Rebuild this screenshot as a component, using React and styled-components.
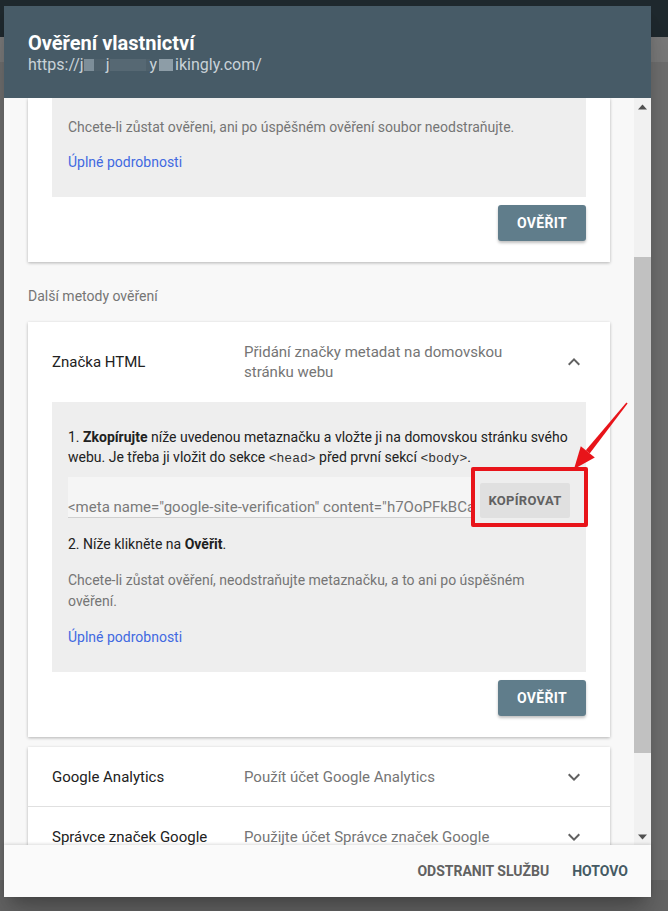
import React from "react";
import styled, { createGlobalStyle } from "styled-components";

const Global = createGlobalStyle`
  html, body {
    margin: 0;
    padding: 0;
  }
  body {
    font-family: Roboto, "Liberation Sans", Arial, sans-serif;
    background: #707070;
  }
  * {
    box-sizing: border-box;
  }
`;

const Backdrop = styled.div`
  position: relative;
  width: 668px;
  height: 911px;
  overflow: hidden;
  padding: 6px 17px 14px 4px;
  background: linear-gradient(
    #1f292e 0 37px,
    #7b7b7b 37px 62px,
    #707070 62px 880px,
    #666 880px
  );
`;

const Dialog = styled.div`
  position: relative;
  width: 647px;
  height: 891px;
  display: flex;
  flex-direction: column;
  background: #f8f8f8;
  box-shadow: 0 11px 15px -7px rgba(0, 0, 0, 0.25),
    0 24px 38px 3px rgba(0, 0, 0, 0.16);
`;

const Header = styled.header`
  height: 92px;
  flex-shrink: 0;
  background: #475b67;
  padding: 25px 24px 0;
  color: #fff;
`;

const Title = styled.h1`
  margin: 0;
  font-size: 20px;
  line-height: 24px;
  font-weight: 700;
`;

const Url = styled.div`
  display: flex;
  align-items: center;
  font-size: 16px;
  line-height: 20px;
  color: #c9d2d8;
`;

const Blur = styled.span`
  display: inline-block;
  width: ${(p) => p.$w}px;
  height: 12px;
  margin: 0 ${(p) => p.$m || 0}px;
  background: ${(p) => p.$c || "#8797a1"};
`;

const Body = styled.div`
  flex: 1;
  display: flex;
  min-height: 0;
`;

const Content = styled.div`
  flex: 1;
  padding: 0 24px;
  overflow: hidden;
  display: flex;
  flex-direction: column;
`;

const Card = styled.section`
  flex-shrink: 0;
  background: #fff;
  box-shadow: 0 1px 3px rgba(0, 0, 0, 0.28);
  padding: ${(p) => (p.$flush ? "0" : "0 24px 21px")};
  margin-top: ${(p) => p.$top || 0}px;
`;

const Panel = styled.div`
  background: #eeeeee;
  padding: ${(p) => (p.$clipped ? "19px" : "25px")} 16px 25px;
  font-size: 14px;
  line-height: 20px;
  color: #212121;
`;

const Step = styled.p`
  margin: ${(p) => p.$top || 0}px 0 0;
  b {
    font-weight: 700;
  }
`;

const Code = styled.code`
  font-family: "Liberation Mono", "DejaVu Sans Mono", monospace;
  font-size: 13px;
  color: #333;
`;

const Note = styled.p`
  margin: ${(p) => p.$top || 0}px 0 0;
  line-height: 21px;
  color: #757575;
`;

const Link = styled.a`
  display: block;
  margin-top: ${(p) => p.$top || 14}px;
  color: #4169e1;
  text-decoration: none;
`;

const Actions = styled.div`
  display: flex;
  justify-content: flex-end;
  margin-top: 8px;
`;

const PrimaryButton = styled.button`
  min-width: 88px;
  height: 36px;
  border: 0;
  border-radius: 3px;
  background: #607d8b;
  color: #fff;
  font-family: inherit;
  font-size: 14px;
  font-weight: 700;
  letter-spacing: 0.3px;
  box-shadow: 0 2px 3px rgba(0, 0, 0, 0.25);
`;

const SectionLabel = styled.div`
  margin: 24px 0 16px;
  font-size: 14px;
  line-height: 20px;
  color: #757575;
`;

const MethodHead = styled.div`
  display: grid;
  grid-template-columns: 192px 1fr 24px;
  align-items: center;
  padding: 20px 0;
`;

const MethodRow = styled.div`
  display: grid;
  grid-template-columns: 192px 1fr 24px;
  align-items: center;
  height: 60px;
  padding: 0 24px;
  border-bottom: 1px solid #e0e0e0;
`;

const MethodName = styled.div`
  font-size: 15px;
  line-height: 20px;
  color: #212121;
`;

const MethodDesc = styled.div`
  max-width: ${(p) => (p.$wrap ? "280px" : "none")};
  font-size: 15px;
  line-height: 20px;
  color: #757575;
`;

const CopyRow = styled.div`
  display: flex;
  align-items: flex-end;
  margin-top: 8px;
`;

const Field = styled.div`
  flex: 1;
  min-width: 0;
  height: 41px;
  padding-top: 20px;
  margin-right: 6px;
  background: #f5f5f5;
  border-bottom: 1px solid #cfcfcf;
  white-space: nowrap;
  overflow: hidden;
  font-size: 15px;
  line-height: 20px;
  color: #7a7a7a;
`;

const CopyButton = styled.button`
  width: 90px;
  height: 35px;
  border: 0;
  border-radius: 2px;
  background: #e0e0e0;
  color: #616161;
  font-family: inherit;
  font-size: 13px;
  font-weight: 700;
  letter-spacing: 0.3px;
`;

const Scrollbar = styled.div`
  width: 17px;
  flex-shrink: 0;
  display: flex;
  flex-direction: column;
  background: #f1f1f1;
`;

const ScrollArrow = styled.div`
  height: 17px;
  display: flex;
  align-items: center;
  justify-content: center;
`;

const Track = styled.div`
  flex: 1;
  padding-top: 142px;
`;

const Thumb = styled.div`
  height: 496px;
  background: #c1c1c1;
`;

const Footer = styled.footer`
  position: relative;
  z-index: 1;
  height: 52px;
  flex-shrink: 0;
  display: flex;
  justify-content: flex-end;
  align-items: center;
  gap: 23px;
  padding-right: 23px;
  background: #fafafa;
  box-shadow: 0 -1px 3px rgba(0, 0, 0, 0.14);
`;

const TextButton = styled.button`
  border: 0;
  padding: 0;
  background: none;
  font-family: inherit;
  font-size: 14px;
  font-weight: 700;
  color: ${(p) => (p.$primary ? "#455a64" : "#616161")};
`;

const Highlight = styled.div`
  position: absolute;
  left: 467px;
  top: 461px;
  width: 117px;
  height: 60px;
  border: 4px solid #e8141a;
  border-radius: 2px;
  pointer-events: none;
`;

const Pointer = styled.svg`
  position: absolute;
  left: 556px;
  top: 384px;
  pointer-events: none;
`;

const Chevron = ({ up }) => (
  <svg width="24" height="24" viewBox="0 0 24 24" fill="#616161">
    {up ? (
      <path d="M12 8l-6 6 1.41 1.41L12 10.83l4.59 4.58L18 14z" />
    ) : (
      <path d="M16.59 8.59L12 13.17 7.41 8.59 6 10l6 6 6-6z" />
    )}
  </svg>
);

const Tri = ({ up }) => (
  <svg width="9" height="6" viewBox="0 0 9 6" fill="#505050">
    {up ? <polygon points="0,5.5 4.5,0.5 9,5.5" /> : <polygon points="0,0.5 4.5,5.5 9,0.5" />}
  </svg>
);

const methods = [
  ["Google Analytics", "Použít účet Google Analytics"],
  ["Správce značek Google", "Použijte účet Správce značek Google"],
];

export default function App() {
  return (
    <>
      <Global />
      <Backdrop>
        <Dialog>
          <Header>
            <Title>Ověření vlastnictví</Title>
            <Url>
              https://j
              <Blur $w={10} $c="#7d8e99" />
              <Blur $w={12} $c="#4e606b" />j
              <Blur $w={36} $c="#566873" />
              <Blur $w={4} $c="#4e606b" />y
              <Blur $w={14} $c="#8d9da7" $m={2} />
              ikingly.com/
            </Url>
          </Header>

          <Body>
            <Content>
              <Card>
                <Panel $clipped>
                  <Note>
                    Chcete-li zůstat ověřeni, ani po úspěšném ověření soubor
                    neodstraňujte.
                  </Note>
                  <Link>Úplné podrobnosti</Link>
                </Panel>
                <Actions>
                  <PrimaryButton>OVĚŘIT</PrimaryButton>
                </Actions>
              </Card>

              <SectionLabel>Další metody ověření</SectionLabel>

              <Card>
                <MethodHead>
                  <MethodName>Značka HTML</MethodName>
                  <MethodDesc $wrap>
                    Přidání značky metadat na domovskou stránku webu
                  </MethodDesc>
                  <Chevron up />
                </MethodHead>
                <Panel>
                  <Step>
                    1. <b>Zkopírujte</b> níže uvedenou metaznačku a vložte ji na
                    domovskou stránku svého webu. Je třeba ji vložit do sekce{" "}
                    <Code>&lt;head&gt;</Code> před první sekcí{" "}
                    <Code>&lt;body&gt;</Code>.
                  </Step>
                  <CopyRow>
                    <Field>
                      &lt;meta name="google-site-verification"
                      content="h7OoPFkBCa3xQv9tLrW2mZpYk" /&gt;
                    </Field>
                    <CopyButton>KOPÍROVAT</CopyButton>
                  </CopyRow>
                  <Step $top={16}>
                    2. Níže klikněte na <b>Ověřit</b>.
                  </Step>
                  <Note $top={16}>
                    Chcete-li zůstat ověření, neodstraňujte metaznačku, a to ani
                    po úspěšném ověření.
                  </Note>
                  <Link $top={15}>Úplné podrobnosti</Link>
                </Panel>
                <Actions>
                  <PrimaryButton>OVĚŘIT</PrimaryButton>
                </Actions>
              </Card>

              <Card $flush $top={10}>
                {methods.map(([name, desc]) => (
                  <MethodRow key={name}>
                    <MethodName>{name}</MethodName>
                    <MethodDesc>{desc}</MethodDesc>
                    <Chevron />
                  </MethodRow>
                ))}
              </Card>
            </Content>

            <Scrollbar>
              <ScrollArrow>
                <Tri up />
              </ScrollArrow>
              <Track>
                <Thumb />
              </Track>
              <ScrollArrow>
                <Tri />
              </ScrollArrow>
            </Scrollbar>
          </Body>

          <Footer>
            <TextButton>ODSTRANIT SLUŽBU</TextButton>
            <TextButton $primary>HOTOVO</TextButton>
          </Footer>

          <Highlight />
          <Pointer width="70" height="84" viewBox="0 0 70 84">
            <polygon points="14,79 34.8,67.4 20.8,56.2" fill="#e8141a" />
            <polygon points="29.7,63.4 25.8,60.2 66.4,12.5 67.6,13.5" fill="#e8141a" />
          </Pointer>
        </Dialog>
      </Backdrop>
    </>
  );
}
